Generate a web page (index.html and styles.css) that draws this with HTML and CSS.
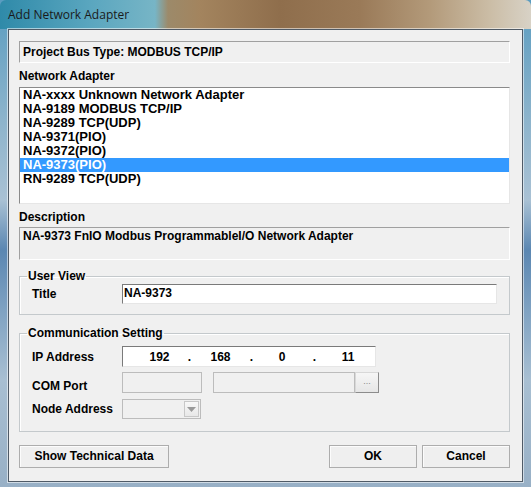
FILE: index.html
```html
<!DOCTYPE html>
<html>
<head>
<meta charset="utf-8">
<link rel="stylesheet" href="styles.css">
</head>
<body>
<div class="window">
  <div class="titlebar">Add Network Adapter</div>
  <div class="client">
    <div class="sunken bus">Project Bus Type: MODBUS TCP/IP</div>
    <div class="label">Network Adapter</div>
    <div class="list">
      <div class="item">NA-xxxx Unknown Network Adapter</div>
      <div class="item">NA-9189 MODBUS TCP/IP</div>
      <div class="item">NA-9289 TCP(UDP)</div>
      <div class="item">NA-9371(PIO)</div>
      <div class="item">NA-9372(PIO)</div>
      <div class="item selected">NA-9373(PIO)</div>
      <div class="item">RN-9289 TCP(UDP)</div>
    </div>
    <div class="label desc-label">Description</div>
    <div class="sunken desc">NA-9373 FnIO Modbus ProgrammableI/O Network Adapter</div>
    <fieldset class="group user-view">
      <legend>User View</legend>
      <div class="row">
        <span class="flabel">Title</span>
        <div class="edit title-edit">NA-9373</div>
      </div>
    </fieldset>
    <fieldset class="group comm">
      <legend>Communication Setting</legend>
      <div class="row ip-row">
        <span class="flabel">IP Address</span>
        <div class="edit ip">
          <span class="oct o1">192</span><span class="dot d1">.</span>
          <span class="oct o2">168</span><span class="dot d2">.</span>
          <span class="oct o3">0</span><span class="dot d3">.</span>
          <span class="oct o4">11</span>
        </div>
      </div>
      <div class="row com-row">
        <span class="flabel">COM Port</span>
        <div class="disabled com1"></div>
        <div class="disabled com2"></div>
        <div class="browse">...</div>
      </div>
      <div class="row node-row">
        <span class="flabel">Node Address</span>
        <div class="disabled combo">
          <div class="arrow"><svg width="9" height="5" viewBox="0 0 9 5"><path d="M0 0H9L4.5 5Z" fill="#9a9a9a"/></svg></div>
        </div>
      </div>
    </fieldset>
    <div class="buttons">
      <div class="btn tech">Show Technical Data</div>
      <div class="spacer"></div>
      <div class="btn ok">OK</div>
      <div class="btn cancel">Cancel</div>
    </div>
  </div>
</div>
</body>
</html>
```

FILE: styles.css
```css
html, body {
  margin: 0;
  padding: 0;
}
body {
  width: 531px;
  height: 487px;
  overflow: hidden;
  font-family: "Liberation Sans", Arial, sans-serif;
}
.window {
  width: 531px;
  height: 487px;
  box-sizing: border-box;
  background: linear-gradient(to bottom, #5a9cc0 0px, #8db4cc 120px, #a9c1d4 200px, #5b87b2 250px, #7fa2c2 310px, #a8bfd2 380px, #98b0c6 487px);
  display: flex;
  flex-direction: column;
}
.titlebar {
  height: 29px;
  flex: none;
  padding-left: 8px;
  box-sizing: border-box;
  font-family: "Open Sans", "Noto Sans", sans-serif;
  font-size: 12px;
  line-height: 29px;
  color: #1a1a1a;
  background: linear-gradient(to right, #2f8aa9 0px, #5aa6bf 90px, #77b5c6 155px, #9c8a6a 168px, #a3845e 200px, #8f6e4c 280px, #9a7a58 360px, #b39a7a 430px, #cbbda6 490px, #d8d2c6 531px);
  border-radius: 6px 6px 0 0;
}
.client {
  margin: 0 8px;
  height: 453px;
  box-sizing: border-box;
  border: 1px solid #4f5a66;
  box-shadow: 0 0 0 1px rgba(255,255,255,0.55);
  background: #f0f0f0;
  padding: 11px 12px 0 10px;
  font-weight: bold;
  font-size: 12px;
  color: #000;
}
.sunken {
  border-style: solid;
  border-width: 1px;
  border-color: #a0a0a0 #ffffff #ffffff #a0a0a0;
  padding-left: 3px;
  box-sizing: border-box;
}
.bus {
  height: 22px;
  line-height: 20px;
}
.label {
  margin-top: 6px;
  line-height: 14px;
  margin-bottom: 4px;
}
.list {
  height: 117px;
  box-sizing: border-box;
  border: 1px solid #8a8a8a;
  border-right-color: #e6e6e6;
  border-bottom-color: #e6e6e6;
  background: #fff;
  font-size: 13px;
}
.item {
  height: 14px;
  line-height: 14px;
  padding-left: 3px;
}
.item.selected {
  background: #3399ff;
  color: #fff;
}
.desc-label {
  margin-top: 6px;
  margin-bottom: 3px;
}
.desc {
  height: 33px;
  padding-top: 1px;
  line-height: 14px;
}
.group {
  margin: 9px 0 0 0;
  padding: 1px 12px 10px 12px;
  border: 1px solid #c4c9cc;
  box-shadow: inset 1px 1px 0 #fff;
  min-width: 0;
}
.group legend {
  padding: 0 1px;
  margin-left: -5px;
  line-height: 14px;
}
.row {
  display: flex;
  align-items: center;
}
.flabel {
  width: 90px;
  flex: none;
}
.edit {
  background: #fff;
  border: 1px solid;
  border-color: #7a7a7a #e6e6e6 #e6e6e6 #7a7a7a;
  box-sizing: border-box;
}
.title-edit {
  width: 375px;
  height: 20px;
  padding-left: 1px;
  line-height: 16px;
}
.comm {
  margin-top: 11px;
  padding-top: 6px;
  padding-bottom: 12px;
}
.ip {
  width: 254px;
  height: 21px;
  display: flex;
  align-items: center;
  padding-left: 24px;
}
.oct, .dot {
  text-align: center;
  flex: none;
}
.o1 { width: 25px; }
.d1 { width: 35px; }
.o2 { width: 27px; }
.d2 { width: 35px; }
.o3 { width: 26px; }
.d3 { width: 39px; }
.o4 { width: 28px; }
.com-row {
  margin-top: 4px;
}
.com-row .flabel {
  padding-top: 8px;
}
.disabled {
  background: #f0f0f0;
  border: 1px solid #bcbcbc;
  box-sizing: border-box;
}
.com1 {
  width: 80px;
  height: 21px;
  margin-right: 11px;
}
.com2 {
  width: 142px;
  height: 21px;
}
.browse {
  width: 24px;
  height: 21px;
  box-sizing: border-box;
  border: 1px solid #9a9a9a;
  border-color: #d8d8d8 #8c8c8c #8c8c8c #d8d8d8;
  background: linear-gradient(#f6f6f6, #e6e6e6);
  color: #8a8a8a;
  font-weight: normal;
  font-size: 9px;
  text-align: center;
  line-height: 17px;
}
.node-row {
  margin-top: 6px;
}
.combo {
  width: 79px;
  height: 20px;
  display: flex;
  justify-content: flex-end;
  padding: 1px;
}
.arrow {
  width: 15px;
  height: 16px;
  box-sizing: border-box;
  border: 1px solid #c8c8c8;
  background: linear-gradient(#f8f8f8, #e8e8e8);
  display: flex;
  align-items: center;
  justify-content: center;
}
.buttons {
  display: flex;
  margin-top: 13px;
}
.spacer {
  flex: 1;
}
.btn {
  height: 23px;
  box-sizing: border-box;
  border: 1px solid #adadad;
  box-shadow: inset 1px 1px 0 #fcfcfc;
  background: #efefef;
  text-align: center;
  line-height: 21px;
}
.tech {
  width: 150px;
}
.ok {
  width: 88px;
  margin-right: 5px;
}
.cancel {
  width: 88px;
}
```
